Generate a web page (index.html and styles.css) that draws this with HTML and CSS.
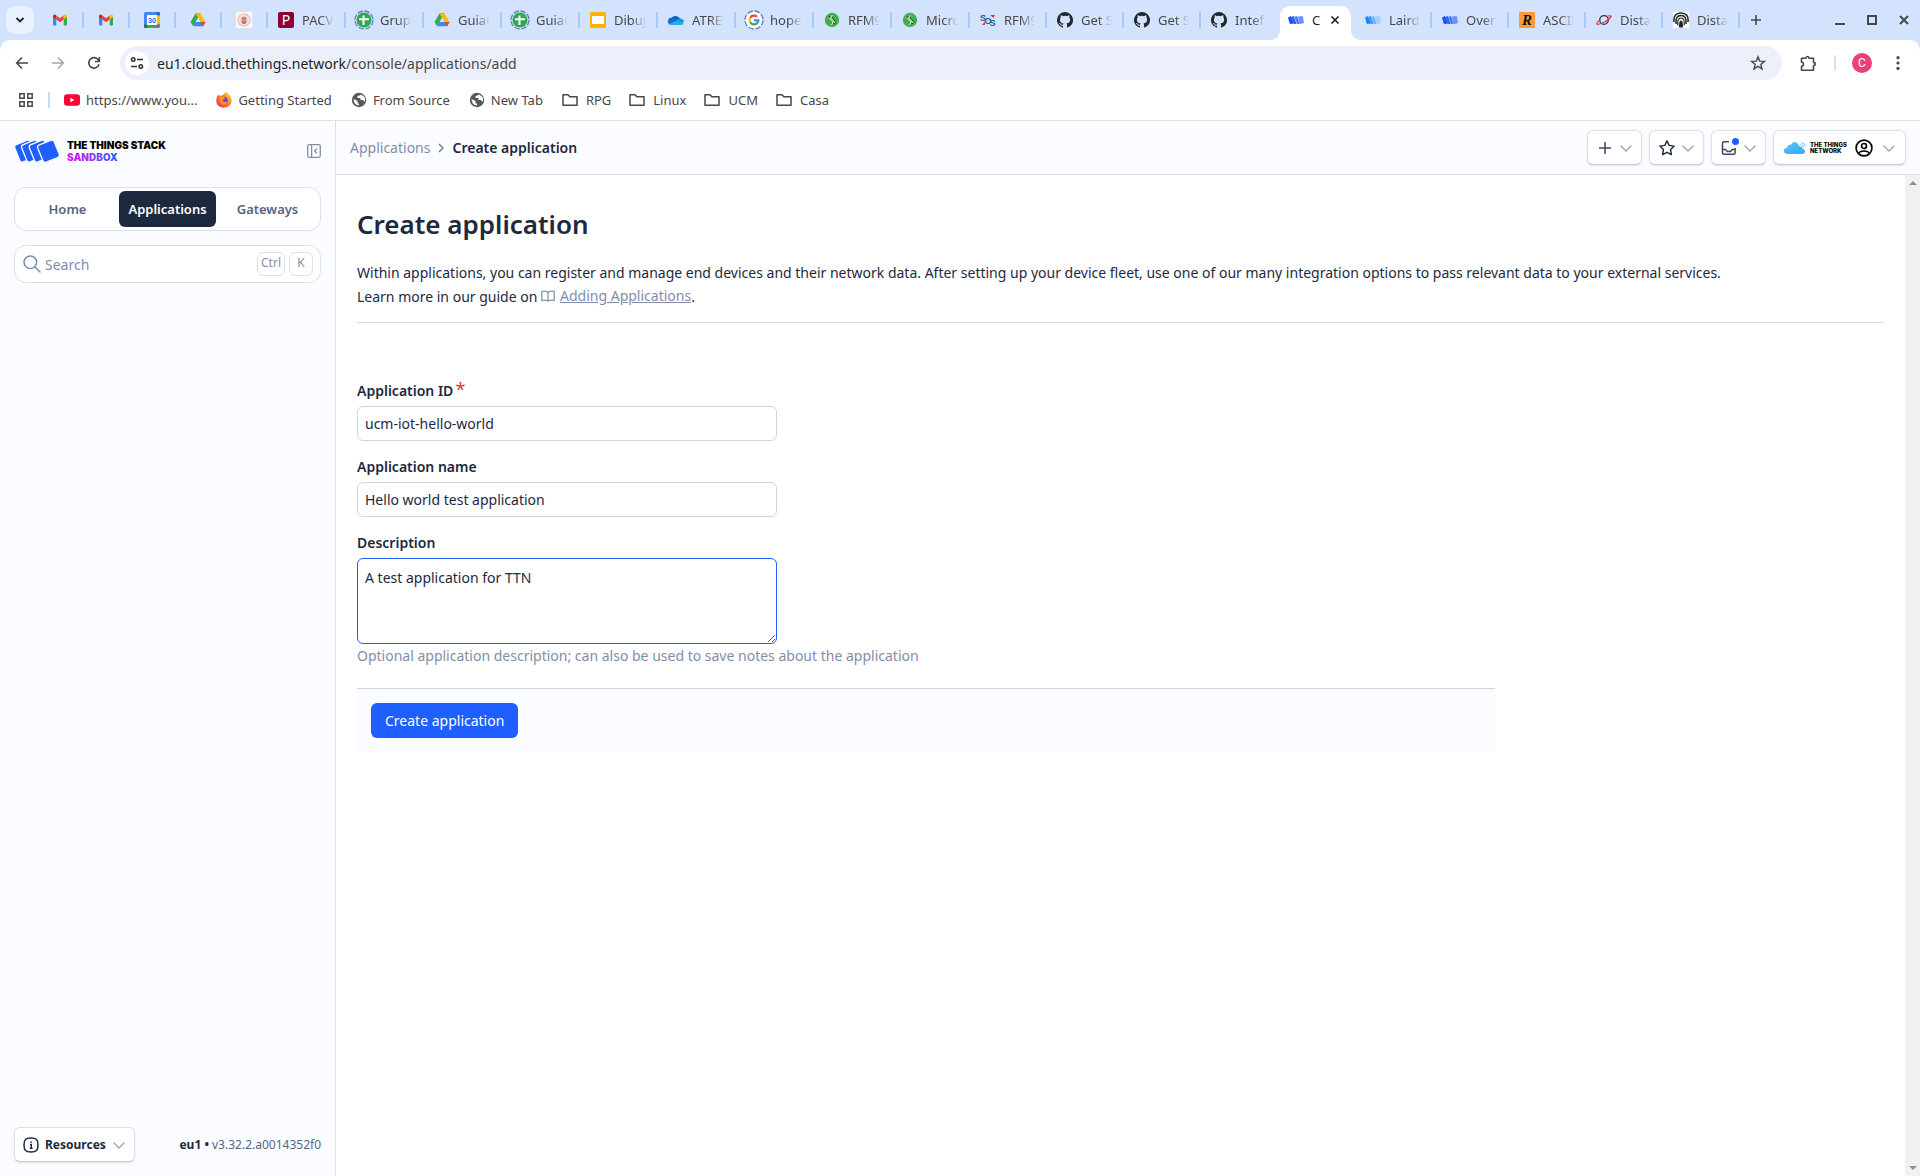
FILE: index.html
```html
<!DOCTYPE html>
<html lang="en">
<head>
<meta charset="utf-8">
<meta name="viewport" content="width=device-width, initial-scale=1">
<title>Create application - The Things Stack</title>
<link rel="stylesheet" href="styles.css">
</head>
<body>
<svg class="sprite" aria-hidden="true">
  <defs>
    <linearGradient id="cloud-fill" x1="0" y1="0" x2="1" y2="1"><stop offset="0" stop-color="#5cc8fa"/><stop offset="1" stop-color="#2fa8fb"/></linearGradient>
    <linearGradient id="fox-fill" x1="0" y1="1" x2="1" y2="0"><stop offset="0" stop-color="#f6246b"/><stop offset=".5" stop-color="#ff7a1f"/><stop offset="1" stop-color="#ffe13a"/></linearGradient>
    <symbol id="gmail" viewBox="0 0 16 16"><path fill="#4285f4" d="M1 4v8.500q0 1 1 1h2.300V7z"/><path fill="#34a853" d="M15 4v8.500q0 1-1 1h-2.300V7z"/><path fill="#ea4335" d="M4.300 3.400 8 6.200l3.700-2.800v4L8 10.200 4.300 7.400z"/><path fill="#c5221f" d="M1 4.200q0-1.500 1.500-1.700 .8 0 1.800.9v4L1 5z"/><path fill="#fbbc04" d="M15 4.200q0-1.500-1.500-1.700-.8 0-1.800.9v4L15 5z"/></symbol>
    <symbol id="calendar" viewBox="0 0 16 16"><rect width="16" height="16" rx="1.500" fill="#4285f4"/><path fill="#1967d2" d="M12.500 0h2q1.500 0 1.500 1.500v2h-3.500z"/><path fill="#fbbc04" d="M12.500 3.500H16v9h-3.500z"/><path fill="#188038" d="M0 12.500h3.500V16h-2Q0 16 0 14.500z"/><path fill="#34a853" d="M3.500 12.500h9V16h-9z"/><path fill="#ea4335" d="M12.500 12.500H16L12.500 16z"/><path fill="#fff" d="M3 3h10v10H3z"/><text x="8" y="10.800" text-anchor="middle" class="calendar-day">30</text></symbol>
    <symbol id="drive" viewBox="0 0 16 16"><path fill="#188038" d="M5.500 1.500h5L8 6z"/><path fill="#fbbc04" d="M10.500 1.500 15.500 10h-5L5.500 1.500z"/><path fill="#34a853" d="M5.500 1.500 8 6 3.200 14.300.5 10z"/><path fill="#4285f4" d="M5.500 10h10l-2.400 4.300H3.100z"/><path fill="#ea4335" d="M10.600 10h4.900l-2.400 4.300z"/><path fill="#d3e3fd" d="M8 6l2.400 4H5.600z"/></symbol>
    <symbol id="seal" viewBox="0 0 16 16"><path fill="#fdf8f6" d="M0 0h16v16H0z"/><circle cx="8" cy="8" r="6" fill="#f8e4e0" stroke="#dba5a2" stroke-width="1.200" stroke-dasharray="1.500 .7"/><circle cx="8" cy="8" r="3.800" fill="#ecc6c1"/><path fill="#b5605b" d="M6 5.500h1.500l.5-1 .5 1H10V7l-1 .8 1 1.200v2.300L8 12l-2-.7V9l1-1.200L6 7z"/><path d="M6.500 8.500h3M8 6v5" stroke="#ecc6c1" stroke-width=".6"/></symbol>
    <symbol id="pacv" viewBox="0 0 16 16"><rect width="16" height="16" rx="2" fill="#8c0032"/><text x="8" y="13" text-anchor="middle" class="pacv-letter">P</text></symbol>
    <symbol id="meet" viewBox="0 0 20 20"><circle cx="10" cy="10" r="9" fill="none" stroke="#5f86c4" stroke-width="1.400" stroke-dasharray="5.500 1.600"/><circle cx="10" cy="10" r="7.500" fill="#2ea94e"/><path fill="#fff" d="M5 8.200h3.500V5.500h2v2.700H15v2h-4.500V15h-2v-4.800H5z"/></symbol>
    <symbol id="slides" viewBox="0 0 16 16"><rect width="16" height="16" rx="1.500" fill="#f9b300"/><path fill="#fff" d="M2 4h12v8H2z"/></symbol>
    <symbol id="onedrive" viewBox="0 0 16 16"><path fill="#0364b8" d="M3 7a5 5 0 0 1 9-.5L8 10z"/><path fill="#0f6fd0" d="M3.200 5.500Q0 6 0 9.500 0 12 2 12.800L10 8z"/><path fill="#1490df" d="M9 7.500q2-2 4.200-.8Q16 7.500 16 10.300L8 11z"/><path fill="#28a8ea" d="M1 12 9.500 8.200 15.800 11.500Q15 13 13.300 13H3.200Q1.800 13 1 12z"/></symbol>
    <symbol id="google" viewBox="0 0 20 20"><circle cx="10" cy="10" r="9" fill="#fff" stroke="#5f86c4" stroke-width="1.400" stroke-dasharray="5.500 1.600"/><g fill="none" stroke-width="2.200"><path stroke="#ea4335" d="M6.200 7.800A4.400 4.400 0 0 1 13 6.800"/><path stroke="#fbbc04" d="M6.200 12.200a4.400 4.400 0 0 1 0-4.400"/><path stroke="#34a853" d="M6.200 12.200a4.400 4.400 0 0 0 6.600 1.200"/><path stroke="#4285f4" d="M12.800 13.400q1.600-1.400 1.600-3.100H10"/></g></symbol>
    <symbol id="green-s" viewBox="0 0 16 16"><circle cx="8" cy="8" r="7.200" fill="#45ad4c"/><path d="M7 4Q4 4.500 4.500 6.500L8.500 11M9 12Q12 11.500 11.500 9.500L7.500 5" fill="none" stroke="#1c3a1d" stroke-width=".9"/><path d="M8.500 3.200Q5.800 4.500 7.200 6.500l4 4.500M7.500 12.800Q9.500 11.500 8 9.500L4 5.500" fill="none" stroke="#fff" stroke-width="1"/></symbol>
    <symbol id="sos" viewBox="0 0 16 16"><text x="0" y="8.500" class="sos-letter">S</text><text x="4.500" y="11.500" class="sos-letter">O</text><text x="9.500" y="13.500" class="sos-letter">S</text><path fill="#e3342f" d="M10 3h5l-1.500 3zM2 13l3-3.500V13z"/></symbol>
    <symbol id="github" viewBox="0 0 16 16"><path fill="#24292f" d="M8 0a8 8 0 0 0-2.530 15.590c.4.070.55-.17.550-.38v-1.490c-2.010.37-2.530-.49-2.690-.94-.09-.23-.48-.94-.82-1.130-.28-.15-.68-.52-.01-.53.63-.01 1.080.58 1.230.82.72 1.210 1.870.87 2.330.66.07-.52.28-.87.51-1.070-1.780-.2-3.640-.89-3.640-3.950 0-.87.31-1.590.82-2.150-.08-.2-.36-1.020.08-2.120 0 0 .67-.21 2.200.82a7.600 7.600 0 0 1 4 0c1.530-1.040 2.200-.82 2.200-.82.44 1.100.16 1.920.08 2.120.51.56.82 1.270.82 2.150 0 3.070-1.870 3.750-3.650 3.950.29.25.54.73.54 1.480v2.200c0 .21.15.46.55.38A8 8 0 0 0 8 0z"/></symbol>
    <symbol id="tts" viewBox="0 0 16 16"><path fill="#1c4ff5" d="M0 5.500 3 4l3 7.500L2.500 12q-.7 0-1-1z"/><path fill="#2d61fa" d="M3.500 4.800 6 4l2.500 8H5.800z"/><path fill="#4775fb" d="M6.600 4.800 9 4l2.500 8H9z"/><path fill="#6c92fd" d="M9.700 4.800 14 4q.8 0 1 1l1 6-3.700 1q-.8 0-1-.8z"/></symbol>
    <symbol id="tts-light" viewBox="0 0 16 16"><path fill="#1687f8" d="M0 5.500 3 4l3 7.500L2.500 12q-.7 0-1-1z"/><path fill="#3d9bfa" d="M3.500 4.800 6 4l2.500 8H5.800z"/><path fill="#6db3fb" d="M6.600 4.800 9 4l2.500 8H9z"/><path fill="#a5cffd" d="M9.700 4.800 14 4q.8 0 1 1l1 6-3.700 1q-.8 0-1-.8z"/></symbol>
    <symbol id="ascii" viewBox="0 0 16 16"><path fill="#ff9a35" d="M0 0h16v16H0z"/><text x="8" y="13" text-anchor="middle" class="ascii-letter">R</text></symbol>
    <symbol id="planet" viewBox="0 0 16 16"><circle cx="8" cy="8" r="4.300" fill="none" stroke="#34343f" stroke-width="1.300"/><path d="M4 8Q0 11 .8 12T6 11.300 13 7t2-3-3.500 0" fill="none" stroke="#e2334f" stroke-width="1.200"/></symbol>
    <symbol id="arches" viewBox="0 0 16 16"><path fill="#fff" d="M0 0h16v16H0z"/><g fill="none" stroke="#222"><path d="M1 10Q0 1 8 1t7 9" stroke-width="1.500"/><path d="M3 12q-1-8.500 5-8.500T13 12" stroke-width="1.500"/><path d="M4.800 13.500Q4 6 8 6t3.200 7.500" stroke-width="1.200"/></g><path fill="#222" d="M6 15.500Q5.800 8.500 8 8.500t2 7z"/></symbol>
    <symbol id="youtube" viewBox="0 0 16 16"><rect y="2.300" width="16" height="11.400" rx="3" fill="#f03"/><path fill="#fff" d="M6.400 5.700v4.600l4-2.300z"/></symbol>
    <symbol id="firefox" viewBox="0 0 16 16"><path fill="url(#fox-fill)" d="M2.500 2.500 4 4q2-1 3-1Q8 1 10.500 0q1 2 3 3 2.500 3 2 6.500A7.500 6.500 0 0 1 .3 9Q0 5 2.500 2.500z"/><circle cx="8" cy="8.300" r="3.600" fill="#7a3ee0"/><path fill="#ff9a20" d="M3.500 5q2-1 4 .2L9.500 6Q7 7 6.500 8.500 8 11 11 9.500 10 13 7 12.500 3.500 11.500 3.500 5z"/></symbol>
    <symbol id="globe" viewBox="0 0 16 16"><circle cx="8" cy="8" r="7.200" fill="#55585d"/><path fill="#fff" d="M9.500 2.500Q8 4 6.500 4v2h3v2h2.500l1.500 2Q15 6 12.500 4zM2.500 7l4 2v2.500h1.500v2Q3 13 2.500 7z"/></symbol>
    <symbol id="folder" viewBox="0 0 16 16"><path d="M1 13.300V2.700h5l1.800 2H15v8.600z" fill="none" stroke="#474747" stroke-width="1.500" stroke-linejoin="round"/></symbol>
    <symbol id="chevron" viewBox="0 0 14 14"><path d="m2 5 5 5 5-5" fill="none" stroke="#97a4be" stroke-width="1.300" stroke-linecap="round"/></symbol>
  </defs>
</svg>

<header class="browser">
  <div class="tab-strip">
    <button class="tab-search" type="button" aria-label="Search tabs"><svg viewBox="0 0 10 10" width="10" height="10"><path d="m1.500 3 3.500 3.500L8.500 3" fill="none" stroke="#1f1f1f" stroke-width="1.800"/></svg></button>
    <nav class="tabs" aria-label="Tabs">
      <a class="tab pinned" href="#" aria-label="Mail"><svg class="fav"><use href="#gmail"/></svg></a>
      <a class="tab pinned" href="#" aria-label="Mail"><svg class="fav"><use href="#gmail"/></svg></a>
      <a class="tab pinned" href="#" aria-label="Calendar"><svg class="fav"><use href="#calendar"/></svg></a>
      <a class="tab pinned" href="#" aria-label="Drive"><svg class="fav"><use href="#drive"/></svg></a>
      <a class="tab pinned" href="#" aria-label="University"><svg class="fav"><use href="#seal"/></svg></a>
      <a class="tab wide" href="#"><svg class="fav"><use href="#pacv"/></svg><span>PACV</span></a>
      <a class="tab wide" href="#"><svg class="fav ring"><use href="#meet"/></svg><span>Grup</span></a>
      <a class="tab wide" href="#"><svg class="fav"><use href="#drive"/></svg><span>GuiaC</span></a>
      <a class="tab wide" href="#"><svg class="fav ring"><use href="#meet"/></svg><span>GuiaC</span></a>
      <a class="tab wide" href="#"><svg class="fav"><use href="#slides"/></svg><span>Dibuj</span></a>
      <a class="tab wide" href="#"><svg class="fav"><use href="#onedrive"/></svg><span>ATREV</span></a>
      <a class="tab wide" href="#"><svg class="fav ring"><use href="#google"/></svg><span>hope</span></a>
      <a class="tab wide" href="#"><svg class="fav"><use href="#green-s"/></svg><span>RFM9</span></a>
      <a class="tab wide" href="#"><svg class="fav"><use href="#green-s"/></svg><span>Micro</span></a>
      <a class="tab" href="#"><svg class="fav"><use href="#sos"/></svg><span>RFM9</span></a>
      <a class="tab" href="#"><svg class="fav"><use href="#github"/></svg><span>Get S</span></a>
      <a class="tab" href="#"><svg class="fav"><use href="#github"/></svg><span>Get S</span></a>
      <a class="tab before-active" href="#"><svg class="fav"><use href="#github"/></svg><span>Intef</span></a>
      <div class="tab active"><svg class="fav"><use href="#tts"/></svg><span>C</span><button type="button" aria-label="Close tab"><svg viewBox="0 0 10 10" width="10" height="10"><path d="m1.500 1.500 7 7m0-7-7 7" stroke="#1f1f1f" stroke-width="1.600"/></svg></button></div>
      <a class="tab" href="#"><svg class="fav"><use href="#tts-light"/></svg><span>Laird</span></a>
      <a class="tab" href="#"><svg class="fav"><use href="#tts"/></svg><span>Over</span></a>
      <a class="tab" href="#"><svg class="fav"><use href="#ascii"/></svg><span>ASCII</span></a>
      <a class="tab" href="#"><svg class="fav"><use href="#planet"/></svg><span>Dista</span></a>
      <a class="tab" href="#"><svg class="fav"><use href="#arches"/></svg><span>Dista</span></a>
    </nav>
    <button class="new-tab" type="button" aria-label="New tab"><svg viewBox="0 0 12 12" width="12" height="12"><path d="M6 1v10M1 6h10" stroke="#474747" stroke-width="1.600"/></svg></button>
    <div class="window-controls">
      <button type="button" aria-label="Minimize"><svg viewBox="0 0 12 12" width="12" height="12"><path d="M1 10h10" stroke="#474747" stroke-width="2"/></svg></button>
      <button type="button" aria-label="Maximize"><svg viewBox="0 0 12 12" width="12" height="12"><path d="M2 2h8v8H2z" fill="none" stroke="#474747" stroke-width="2"/></svg></button>
      <button type="button" aria-label="Close"><svg viewBox="0 0 12 12" width="12" height="12"><path d="m2 2 8 8m0-8-8 8" stroke="#474747" stroke-width="2"/></svg></button>
    </div>
  </div>
  <div class="chrome-body">
    <div class="toolbar">
      <div class="nav-buttons">
        <button type="button" aria-label="Back"><svg viewBox="0 0 14 14" width="14" height="14"><path d="M13 7H2m5-5.500L1.700 7 7 12.500" fill="none" stroke="#474747" stroke-width="1.600"/></svg></button>
        <button type="button" aria-label="Forward"><svg viewBox="0 0 14 14" width="14" height="14"><path d="M1 7h11M7 1.500 12.300 7 7 12.500" fill="none" stroke="#a9a9a9" stroke-width="1.600"/></svg></button>
        <button type="button" aria-label="Reload"><svg viewBox="0 0 14 14" width="14" height="14"><path d="M12 8.300A5.200 5.200 0 1 1 10.800 3.300L12.200 5M12.400 1v4.500H8" fill="none" stroke="#474747" stroke-width="1.600"/></svg></button>
      </div>
      <div class="omnibox">
        <button class="site-info" type="button" aria-label="Site information"><svg viewBox="0 0 14 14" width="14" height="14"><g fill="none" stroke="#333" stroke-width="1.600"><circle cx="3.200" cy="3.500" r="1.700"/><path d="M7 3.500h6M1 10.500h6"/><circle cx="10.800" cy="10.500" r="1.700"/></g></svg></button>
        <div class="url" role="textbox" aria-label="Address">eu1.cloud.thethings.network<span>/console/applications/add</span></div>
        <button type="button" aria-label="Bookmark this page"><svg viewBox="0 0 16 16" width="16" height="16"><path d="m8 1.800 1.700 4.300 4.700.3-3.600 3 1.200 4.500L8 11.400l-4 2.500 1.200-4.500-3.600-3 4.700-.3z" fill="none" stroke="#474747" stroke-width="1.400"/></svg></button>
      </div>
      <button class="extensions" type="button" aria-label="Extensions"><svg viewBox="0 0 17 17" width="17" height="17"><path d="M1.500 3.200H6q0-1.700 1.500-1.700T9 3.200h4.500v4.300q1.800 0 1.800 1.500t-1.800 1.500v4.700h-12v-4q2-.2 2-2t-2-2z" fill="none" stroke="#474747" stroke-width="1.600" stroke-linejoin="round"/></svg></button>
      <i class="divider"></i>
      <button class="profile" type="button" aria-label="Profile">C</button>
      <button class="kebab" type="button" aria-label="Menu"><svg viewBox="0 0 4 14" width="4" height="14"><g fill="#474747"><circle cx="2" cy="1.700" r="1.600"/><circle cx="2" cy="7" r="1.600"/><circle cx="2" cy="12.300" r="1.600"/></g></svg></button>
    </div>
    <nav class="bookmarks" aria-label="Bookmarks">
      <button class="apps" type="button" aria-label="Apps"><svg viewBox="0 0 14 14" width="14" height="14"><path d="M.8.8h4.400v4.400H.8zM8.800.8h4.400v4.400H8.800zM.8 8.800h4.400v4.400H.8zM8.800 8.800h4.400v4.400H8.800z" fill="none" stroke="#474747" stroke-width="1.500"/></svg></button>
      <i class="divider"></i>
      <a href="#"><svg class="fav"><use href="#youtube"/></svg>https://www.you...</a>
      <a href="#"><svg class="fav"><use href="#firefox"/></svg>Getting Started</a>
      <a href="#"><svg class="fav"><use href="#globe"/></svg>From Source</a>
      <a href="#"><svg class="fav"><use href="#globe"/></svg>New Tab</a>
      <a class="folder" href="#"><svg class="fav"><use href="#folder"/></svg>RPG</a>
      <a class="folder" href="#"><svg class="fav"><use href="#folder"/></svg>Linux</a>
      <a class="folder" href="#"><svg class="fav"><use href="#folder"/></svg>UCM</a>
      <a class="folder" href="#"><svg class="fav"><use href="#folder"/></svg>Casa</a>
    </nav>
  </div>
</header>

<div class="app">
  <aside class="sidebar">
    <div class="brand">
      <a class="logo" href="#">
        <svg viewBox="0 0 138 68" width="46" height="23" aria-hidden="true"><g fill="#1f5eff" stroke="#fbfcff" stroke-width="4"><rect x="8" y="5" width="50" height="56" rx="8" transform="rotate(-22 33 33)"/><rect x="29" y="5" width="50" height="56" rx="8" transform="rotate(-22 54 33)"/><rect x="52" y="5" width="50" height="56" rx="8" transform="rotate(-22 77 33)"/><rect x="77" y="5" width="53" height="56" rx="8" transform="rotate(-22 104 33)"/></g></svg>
        <span class="wordmark"><b>THE THINGS STACK</b><b class="edition">SANDBOX</b></span>
      </a>
      <button class="collapse" type="button" aria-label="Collapse sidebar"><svg viewBox="0 0 14 14" width="14" height="14"><g fill="none" stroke="#7f8eaa" stroke-width="1.300"><rect x=".7" y=".7" width="12.600" height="12.600" rx="1.500"/><path d="M4.600 1v12M9.800 4.800 7.700 7l2.100 2.200"/></g></svg></button>
    </div>
    <nav class="switcher" aria-label="Sections">
      <a href="#">Home</a>
      <a class="current" href="#">Applications</a>
      <a href="#">Gateways</a>
    </nav>
    <button class="search" type="button">
      <svg viewBox="0 0 18 18" width="18" height="18"><path d="M12 12l5 5" stroke="#7f8eaa" stroke-width="1.500" stroke-linecap="round"/><circle cx="7.300" cy="7.300" r="6.300" fill="none" stroke="#7f8eaa" stroke-width="1.500"/></svg>
      <span>Search</span><kbd>Ctrl</kbd><kbd>K</kbd>
    </button>
    <footer class="side-footer">
      <button class="card-button" type="button">
        <svg viewBox="0 0 16 16" width="16" height="16"><path d="M8 1c5.500 0 7 1.500 7 7s-1.500 7-7 7-7-1.500-7-7 1.500-7 7-7z" fill="none" stroke="#1d293f" stroke-width="1.500"/><path d="M7 7.500h1.300V11M6.800 11.300h2.800M8 4.200v1.500" fill="none" stroke="#1d293f" stroke-width="1.400"/></svg>
        <b>Resources</b>
        <svg width="14" height="14"><use href="#chevron"/></svg>
      </button>
      <p class="version"><b>eu1 •</b> v3.32.2.a0014352f0</p>
    </footer>
  </aside>

  <div class="content">
    <div class="topbar">
      <nav class="breadcrumb" aria-label="Breadcrumb">
        <a href="#">Applications</a>
        <svg viewBox="0 0 6 10" width="6" height="10"><path d="m1 1 4 4-4 4" fill="none" stroke="#66758f" stroke-width="1.300"/></svg>
        <b>Create application</b>
      </nav>
      <div class="actions">
        <button class="card-button" type="button" aria-label="Add"><svg viewBox="0 0 16 16" width="16" height="16"><path d="M8 2v12M2 8h12" stroke="#3a4860" stroke-width="1.500"/></svg><svg width="14" height="14"><use href="#chevron"/></svg></button>
        <button class="card-button" type="button" aria-label="Bookmarks"><svg viewBox="0 0 16 16" width="16" height="16"><path d="m8 .9 2.200 4.500 5 .7-3.600 3.500.8 5L8 12.300l-4.400 2.300.8-5L.8 6.100l5-.7z" fill="none" stroke="#1d293f" stroke-width="1.400" stroke-linejoin="round"/></svg><svg width="14" height="14"><use href="#chevron"/></svg></button>
        <button class="card-button inbox" type="button" aria-label="Notifications"><svg viewBox="0 0 16 16" width="16" height="16"><path d="M8 1.700H3q-1.500 0-1.500 1.500v9.600q0 1.500 1.500 1.500h9.600q1.500 0 1.500-1.500V8M1.500 9.500h3l1.800 2h3.200l1.800-2h2.800" fill="none" stroke="#3a4860" stroke-width="1.500"/></svg><svg width="14" height="14"><use href="#chevron"/></svg></button>
        <button class="card-button account" type="button" aria-label="Account">
          <svg viewBox="0 0 24 14" width="24" height="14"><path d="M4 13Q.8 12.500.8 9.800T4 6.700Q4.500 3.500 8 3.500 10 0 13.500 1.500q2 1 2.500 3.500 3 0 3.500 2.500 2.500.8 2.500 3T19.500 13z" fill="url(#cloud-fill)"/><path d="M17.500 3.300q2.500.5 3 3M18.500 1.500q3.300.7 3.800 4" fill="none" stroke="#5cc8fa" stroke-width="1"/></svg>
          <span class="network">THE THINGS<br>NETWORK</span>
          <svg viewBox="0 0 18 18" width="18" height="18"><g fill="none" stroke="#000" stroke-width="1.700"><circle cx="9" cy="9" r="7.900"/><circle cx="9" cy="7" r="2.500"/><path d="M3.800 14.500q1-2.500 5.200-2.500t5.200 2.500"/></g></svg>
          <svg class="last" width="14" height="14"><use href="#chevron"/></svg>
        </button>
      </div>
    </div>
    <div class="viewport">
      <main>
        <h1>Create application</h1>
        <p class="intro">Within applications, you can register and manage end devices and their network data. After setting up your device fleet, use one of our many integration options to pass relevant data to your external services.<br>Learn more in our guide on <a class="doc" href="#"><svg viewBox="0 0 14 12" width="14" height="12"><path d="M7 2.500Q4 .5.800 1.500v9Q4 9.500 7 11q3-1.500 6.200-.5v-9Q10 .5 7 2.500V11" fill="none" stroke="#7f8eaa" stroke-width="1.200"/></svg><span>Adding Applications</span></a>.</p>
        <form>
          <div class="field">
            <label for="app-id">Application ID<em>*</em></label>
            <input id="app-id" type="text" value="ucm-iot-hello-world">
          </div>
          <div class="field">
            <label for="app-name">Application name</label>
            <input id="app-name" type="text" value="Hello world test application">
          </div>
          <div class="field">
            <label for="app-description">Description</label>
            <textarea id="app-description" class="focused" aria-describedby="description-hint">A test application for TTN</textarea>
            <p class="hint" id="description-hint">Optional application description; can also be used to save notes about the application</p>
          </div>
          <div class="submit-bar"><button type="submit">Create application</button></div>
        </form>
      </main>
      <div class="scrollbar" aria-hidden="true"><i class="up"></i><i class="down"></i></div>
    </div>
  </div>
</div>
</body>
</html>
```
FILE: styles.css
```css
* { box-sizing: border-box; }

:root {
  --ink: #1d293f;
  --muted: #7f8eaa;
  --line: #dce0e9;
  --surface: #fbfcff;
  --brand: #1f5eff;
}

body {
  display: flex;
  flex-direction: column;
  min-height: 100vh;
  margin: 0;
  color: var(--ink);
  background: #fff;
  font: 14px/23px "Noto Sans", sans-serif;
}

button {
  display: flex;
  align-items: center;
  justify-content: center;
  margin: 0;
  padding: 0;
  border: 0;
  background: none;
  color: inherit;
  font: inherit;
}

a { color: inherit; text-decoration: none; }
svg { flex: none; }
.sprite { position: absolute; width: 0; height: 0; }
.fav { width: 16px; height: 16px; }

/* Favicon lettering */
.calendar-day { font: bold 7px Roboto, sans-serif; fill: #1a73e8; }
.pacv-letter { font: 14px "Noto Sans", sans-serif; fill: #fff; }
.sos-letter { font: bold 9px "Liberation Sans", sans-serif; fill: #1560a0; }
.ascii-letter { font: italic bold 15px "Liberation Serif", serif; fill: #111; }

/* Browser window */
.browser { background: #d3e3fd; border-bottom: 1px solid #dfe1e5; }

.tab-strip { display: flex; align-items: center; height: 40px; padding-left: 6px; }
.tab-search { width: 28px; height: 28px; border-radius: 9px; background: #e9f0fe; }

.tabs { display: flex; height: 40px; padding: 6px 0 0 4px; color: #474747; font-size: 13px; line-height: 28px; }
.tab { position: relative; display: flex; align-items: center; gap: 8px; width: 77px; height: 28px; padding: 0 12px 0 10px; }
.tab.wide { width: 78px; }
.tab.pinned { width: 46px; padding-left: 14px; }
.tab::after { content: ""; position: absolute; right: 0; top: 6px; width: 2px; height: 16px; border-radius: 1px; background: #a8c7fa; }
.tab.active::after, .tab.before-active::after { display: none; }
.tab span { flex: 1; min-width: 0; overflow: hidden; white-space: nowrap; -webkit-mask-image: linear-gradient(90deg, #000 calc(100% - 14px), transparent); mask-image: linear-gradient(90deg, #000 calc(100% - 14px), transparent); }
.tab.active span { -webkit-mask-image: none; mask-image: none; }
.tab .ring { width: 20px; height: 20px; margin: 0 -2px; }
.tab.active { width: 71px; height: 34px; margin: 0 4px 0 2px; padding: 0 11px 6px 8px; border-radius: 10px 10px 0 0; background: #fff; color: #1f1f1f; }
.tab.active::before { content: ""; position: absolute; left: -10px; right: -10px; bottom: 0; height: 10px; background: radial-gradient(circle at 0 0, transparent 10px, #fff 10px) left / 10px 10px no-repeat, radial-gradient(circle at 100% 0, transparent 10px, #fff 10px) right / 10px 10px no-repeat; }
.new-tab { width: 32px; height: 28px; }
.window-controls { display: flex; margin-left: auto; }
.window-controls button { width: 32px; height: 28px; }

.chrome-body { border-radius: 10px 10px 0 0; background: #fff; color: #474747; }
.toolbar { display: flex; align-items: center; padding: 6px 14px 0 4px; }
.nav-buttons { display: flex; width: 116px; }
.nav-buttons button { width: 36px; height: 34px; }
.omnibox { display: flex; flex: 1; align-items: center; height: 34px; padding: 0 16px 0 5px; border-radius: 17px; background: #ecf0fa; }
.site-info { width: 24px; height: 24px; margin-right: 8px; border-radius: 12px; background: #fff; }
.url { flex: 1; color: #1f1f1f; font-size: 14px; }
.url span { color: #474747; }
.extensions { margin-left: 18px; }
.divider { width: 2px; height: 16px; border-radius: 1px; background: #d3e3fd; }
.toolbar .divider { margin: 0 16px 0 17px; }
.profile { width: 20px; height: 20px; border-radius: 10px; background: #ec407a; color: #fff; font: 12px/20px Roboto, sans-serif; }
.kebab { width: 16px; height: 20px; margin-left: 18px; }

.bookmarks { display: flex; align-items: center; height: 40px; padding-left: 18px; font-size: 13px; }
.bookmarks .apps { width: 16px; }
.bookmarks .divider { margin: 0 14px; background: #c5dafc; }
.bookmarks a { display: flex; align-items: center; gap: 6px; margin-right: 19px; }
.bookmarks .folder { gap: 8px; margin-right: 18px; }

/* Console */
.app { display: grid; flex: 1; grid-template-columns: 336px minmax(0, 1fr); }

.sidebar { display: flex; flex-direction: column; padding: 14px; border-right: 1px solid var(--line); background: var(--surface); }
.brand { display: flex; align-items: center; justify-content: space-between; height: 32px; }
.logo { display: flex; align-items: center; gap: 7px; }
.wordmark { display: flex; flex-direction: column; color: #000; font: 700 10px/12px Inter, sans-serif; }
.edition { align-self: flex-start; background: linear-gradient(90deg, #e010f0, #8a3cff 55%, #1f5eff); -webkit-background-clip: text; background-clip: text; color: transparent; }

.switcher { display: grid; grid-template-columns: 1fr 97px 1fr; gap: 2px; margin-top: 20px; padding: 3px; border: 1px solid var(--line); border-radius: 12px; background: #fff; color: #566585; font-size: 13px; font-weight: 600; line-height: 36px; text-align: center; }
.switcher .current { border-radius: 6px; background: var(--ink); color: #fff; }

.search { gap: 4px; width: 100%; height: 38px; margin-top: 14px; padding: 0 7px 0 8px; border: 1px solid var(--line); border-radius: 12px; background: #fff; color: var(--muted); text-align: left; }
.search span { flex: 1; }
kbd { height: 24px; padding: 0 3px; border: 1px solid var(--line); border-radius: 6px; font: 12px/20px "Noto Sans", sans-serif; }
kbd:last-child { min-width: 24px; padding: 0; text-align: center; }

.side-footer { display: flex; align-items: center; justify-content: space-between; margin-top: auto; font-size: 12px; }
.version { margin: 0; color: #566585; }
.version b { color: var(--ink); }

.card-button { gap: 6px; height: 35px; padding: 0 8px; border: 1px solid var(--line); border-bottom-color: #c5cbd8; border-radius: 6px; background: #fff; box-shadow: 0 1px 2px rgb(29 41 63 / 12%); }
.card-button b { font-size: 12px; }

.content { display: flex; flex-direction: column; }
.topbar { display: flex; align-items: center; justify-content: space-between; height: 54px; padding: 0 14px; border-bottom: 1px solid var(--line); background: var(--surface); }
.breadcrumb { display: flex; align-items: center; gap: 8px; color: var(--muted); }
.breadcrumb b { color: var(--ink); font-weight: 600; }
.actions { display: flex; gap: 7px; }
.actions .card-button { width: 55px; }
.inbox { position: relative; }
.inbox::after { content: ""; position: absolute; top: 7px; right: 26px; width: 7px; height: 7px; border-radius: 50%; background: var(--brand); }
.actions .account { gap: 3px; width: 133px; }
.network { width: 42px; color: #000; font: 800 6px/6px Inter, sans-serif; text-align: left; }
.account .last { margin-left: 6px; }

.viewport { display: flex; flex: 1; }
main { flex: 1; min-width: 0; padding: 34px 21px 0; }
h1 { margin: 0; font-size: 26px; font-weight: 600; line-height: 30px; }
.intro { margin: 22px 0 0; padding-bottom: 14px; border-bottom: 1px solid var(--line); }
.doc { display: inline-flex; align-items: center; gap: 5px; color: var(--muted); }
.doc span { text-decoration: underline; }

form { max-width: 1138px; margin-top: 56px; }
.field { display: flex; flex-direction: column; align-items: flex-start; margin-bottom: 14px; }
label { margin-bottom: 4px; font-weight: 600; }
label em { margin-left: 2px; color: #e3342f; font-style: normal; font-weight: 400; font-size: 18px; line-height: 16px; }
input, textarea { width: 420px; max-width: 100%; border: 1px solid #cfd5e2; border-radius: 6px; outline: 0; background: #fff; color: var(--ink); font: inherit; }
input { height: 35px; padding: 0 7px; }
textarea { height: 86px; padding: 7px; resize: both; }
textarea.focused { border-color: var(--brand); }
.hint { margin: 0; color: var(--muted); }
.submit-bar { margin-top: 21px; padding: 14px; border-top: 1px solid #cfd5e2; background: var(--surface); }
.submit-bar button { height: 35px; padding: 0 14px; border-radius: 6px; background: var(--brand); color: #fff; }

.scrollbar { display: flex; flex-direction: column; align-items: center; justify-content: space-between; width: 15px; padding: 6px 0; background: #f1f1f1; }
.scrollbar i { border: 4px solid transparent; }
.scrollbar .up { border-top: 0; border-bottom-color: #8f8f8f; }
.scrollbar .down { border-bottom: 0; border-top-color: #8f8f8f; }
```
